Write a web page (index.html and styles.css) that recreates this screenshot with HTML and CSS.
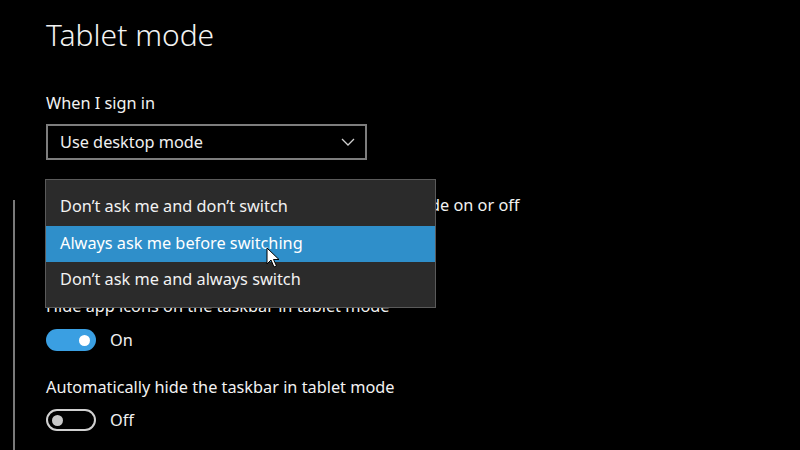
FILE: index.html
```html
<!DOCTYPE html>
<html lang="en">
<head>
<meta charset="utf-8">
<title>Tablet mode</title>
<link rel="stylesheet" href="styles.css">
</head>
<body>
<div class="page">
  <div class="rail"><div class="rail-line"></div></div>
  <main class="content">
    <h1 class="title">Tablet mode</h1>

    <div class="label label-first">When I sign in</div>
    <div class="combo-wrap">
      <div class="combo">
        <span class="combo-text">Use desktop mode</span>
        <svg class="chevron" width="14" height="8" viewBox="0 0 14 8"><path d="M1 1 L7 7 L13 1" fill="none" stroke="#cfcfcf" stroke-width="1.3"/></svg>
      </div>
      <ul class="menu">
        <li class="menu-item">Don’t ask me and don’t switch</li>
        <li class="menu-item selected">Always ask me before switching</li>
        <li class="menu-item">Don’t ask me and always switch</li>
      </ul>
      <svg class="cursor" width="14" height="22" viewBox="0 0 14 22"><path d="M1 1 L1 17 L5 13 L8 20 L10.5 19 L7.5 12.5 L13 12.5 Z" fill="#ffffff" stroke="#000000" stroke-width="1" stroke-linejoin="round"/></svg>
    </div>

    <div class="label label-gap">When this device automatically switches tablet mode on or off</div>
    <div class="combo combo-hidden"><span class="combo-text">Always ask me before switching</span></div>

    <div class="label label-hide">Hide app icons on the taskbar in tablet mode</div>
    <div class="toggle-row">
      <span class="toggle on"><span class="knob"></span></span>
      <span class="toggle-text">On</span>
    </div>

    <div class="label label-auto">Automatically hide the taskbar in tablet mode</div>
    <div class="toggle-row toggle-row-last">
      <span class="toggle off"><span class="knob"></span></span>
      <span class="toggle-text">Off</span>
    </div>
  </main>
</div>
</body>
</html>
```

FILE: styles.css
```css
* { box-sizing: border-box; }
html, body {
  margin: 0;
  padding: 0;
  background: #000;
  height: 100%;
  overflow: hidden;
}
body {
  font-family: "Noto Sans", "Open Sans", sans-serif;
  color: #ffffff;
  font-size: 16.3px;
}
.page {
  display: flex;
  height: 450px;
}
.rail {
  width: 46px;
  flex: none;
  display: flex;
}
.rail-line {
  width: 2px;
  margin-left: 13px;
  margin-top: 200px;
  background: #7a7a7a;
}
.content {
  flex: 1;
  display: flex;
  flex-direction: column;
  align-items: flex-start;
}
.title {
  margin: 15px 0 0 0;
  font-size: 30px;
  font-weight: 300;
  line-height: 40px;
  color: #f2f2f2;
}
.label {
  line-height: 22px;
  color: #f2f2f2;
  white-space: nowrap;
}
.label-first {
  margin-top: 37px;
}
.combo-wrap {
  position: relative;
  margin-top: 10px;
}
.combo {
  width: 321px;
  height: 36px;
  border: 2px solid #7d7d7d;
  display: flex;
  align-items: center;
  justify-content: space-between;
  padding: 0 10px 0 12px;
}
.combo-text { color: #f0f0f0; }
.chevron { display: block; }
.menu {
  position: absolute;
  left: -1px;
  top: 55px;
  width: 391px;
  margin: 0;
  padding: 9px 0 8px 0;
  list-style: none;
  background: #2b2b2b;
  border: 1px solid #5a5a5a;
  z-index: 5;
}
.menu-item {
  height: 36.5px;
  line-height: 35px;
  padding-left: 14px;
  color: #f2f2f2;
}
.menu-item.selected {
  background: #2f8fca;
  color: #ffffff;
}
.cursor {
  position: absolute;
  left: 220px;
  top: 123px;
  z-index: 6;
}
.label-gap { margin-top: 34px; }
.combo-hidden { margin-top: 10px; }
.label-hide { margin-top: 33px; }
.toggle-row {
  display: flex;
  align-items: center;
  margin-top: 12px;
  height: 22px;
}
.toggle-row-last { margin-top: 11px; }
.toggle {
  width: 50px;
  height: 22px;
  border-radius: 11px;
  display: flex;
  align-items: center;
  padding: 0 6px;
}
.toggle.on {
  background: #3a9fe2;
  justify-content: flex-end;
}
.toggle.off {
  border: 2px solid #d0d0d0;
  justify-content: flex-start;
  padding: 0 4px;
}
.knob {
  width: 11px;
  height: 11px;
  border-radius: 50%;
}
.toggle.on .knob { background: #ffffff; }
.toggle.off .knob { background: #c8c8c8; }
.toggle-text {
  margin-left: 14px;
  color: #f2f2f2;
  line-height: 22px;
}
.label-auto { margin-top: 25px; }
```
